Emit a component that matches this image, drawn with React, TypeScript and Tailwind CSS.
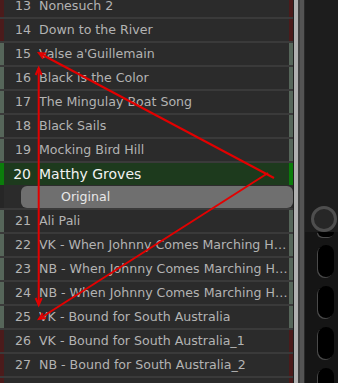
import React from 'react';

type Song = { n: number; title: string; mark: 'red' | 'green' | 'active' };

const songs: Song[] = [
  { n: 13, title: 'Nonesuch 2', mark: 'red' },
  { n: 14, title: 'Down to the River', mark: 'red' },
  { n: 15, title: "Valse a'Guillemain", mark: 'green' },
  { n: 16, title: 'Black is the Color', mark: 'green' },
  { n: 17, title: 'The Mingulay Boat Song', mark: 'green' },
  { n: 18, title: 'Black Sails', mark: 'green' },
  { n: 19, title: 'Mocking Bird Hill', mark: 'green' },
  { n: 20, title: 'Matthy Groves', mark: 'active' },
];

const more: Song[] = [
  { n: 21, title: 'Ali Pali', mark: 'green' },
  { n: 22, title: 'VK - When Johnny Comes Marching Home', mark: 'green' },
  { n: 23, title: 'NB - When Johnny Comes Marching Home', mark: 'green' },
  { n: 24, title: 'NB - When Johnny Comes Marching Home', mark: 'green' },
  { n: 25, title: 'VK - Bound for South Australia', mark: 'green' },
  { n: 26, title: 'VK - Bound for South Australia_1', mark: 'red' },
  { n: 27, title: 'NB - Bound for South Australia_2', mark: 'red' },
  { n: 28, title: '', mark: 'red' },
];

const stripe = {
  red: 'bg-[#4b1b1b]',
  green: 'bg-[#56665a]',
  active: 'bg-[#0b7d0b]',
};

function Row({ song }: { song: Song }) {
  const active = song.mark === 'active';
  return (
    <div className={`flex h-[22px] shrink-0 ${active ? 'bg-[#1d3a1d]' : 'bg-[#2b2b2b]'}`}>
      <div className={`w-[4px] ${stripe[song.mark]}`} />
      <div
        className={`flex min-w-0 flex-1 items-center ${
          active ? 'text-[14px] text-[#f2f2f2]' : 'text-[12.6px] text-[#b3b3b3]'
        }`}
      >
        <span className="w-[27px] shrink-0 text-right">{song.n}</span>
        <span className="ml-[8px] min-w-0 flex-1 truncate">{song.title}</span>
      </div>
      <div className={`w-[4px] ${stripe[song.mark]}`} />
    </div>
  );
}

function Pill() {
  return <div className="ml-[13px] h-[32px] w-[16px] rounded-full bg-black shadow-[-1px_1px_0_#4a4a4a]" />;
}

export default function App() {
  return (
    <div
      className="relative flex h-[383px] w-[338px] overflow-hidden bg-[#1c1c1c]"
      style={{ fontFamily: '"DejaVu Sans", Verdana, sans-serif' }}
    >
      {/* song list */}
      <div className="w-[293px] shrink-0 overflow-hidden bg-[#3a3a3a]">
        <div className="-mt-[5px] flex flex-col gap-[2px]">
          <div className="flex flex-col gap-[2px]">
            {songs.map((s) => (
              <Row key={s.n} song={s} />
            ))}
          </div>
          <div className="-mt-[2px] flex h-[23px] shrink-0 bg-[#2b2b2b]">
            <div className="w-[4px] bg-[#262626]" />
            <div className="ml-[17px] mt-[1px] flex h-[22px] flex-1 items-center rounded-[6px] bg-[#6f6f6f] pl-[40px] text-[12.6px] text-[#e8e8e8]">
              Original
            </div>
          </div>
          {more.map((s) => (
            <Row key={s.n} song={s} />
          ))}
        </div>
      </div>

      {/* divider */}
      <div className="w-[1px] bg-[#1f1f1f]" />
      <div className="w-[4px] bg-[#b0b0b0]" />
      <div className="w-[2px] bg-[#404040]" />
      <div className="w-[4px] bg-[#545454]" />
      <div className="w-[1px] bg-[#2a2a2a]" />

      {/* side panel */}
      <div className="flex flex-1 flex-col">
        <div className="h-[240px] bg-[#1d1d1d] pt-[206px]">
          <div className="ml-[6px] h-[26px] w-[26px] rounded-full border-[3px] border-[#4e4e4e] bg-[#272727]" />
        </div>
        <div className="flex flex-1 flex-col gap-[9px] bg-[#151515]">
          <div className="-mb-[1px] ml-[13px] h-[5px] w-[16px] rounded-b-full bg-black shadow-[-1px_1px_0_#4a4a4a]" />
          <Pill />
          <Pill />
          <Pill />
          <Pill />
        </div>
      </div>

      {/* red annotation arrows */}
      <svg
        className="pointer-events-none absolute left-0 top-0"
        width="338"
        height="383"
        viewBox="0 0 338 383"
        fill="none"
        stroke="#e30000"
        strokeWidth="2"
      >
        <line x1="274" y1="178" x2="39" y2="53" />
        <polyline points="43.2,58.6 39,53 46,53.4" />
        <line x1="268" y1="173" x2="39" y2="319" />
        <polyline points="45.9,318.1 39,319 42.8,313.1" />
        <line x1="38.7" y1="68" x2="38.7" y2="305" />
        <polyline points="35.7,75 38.7,68 41.7,75" />
        <polyline points="35.7,298 38.7,305 41.7,298" />
      </svg>
    </div>
  );
}
